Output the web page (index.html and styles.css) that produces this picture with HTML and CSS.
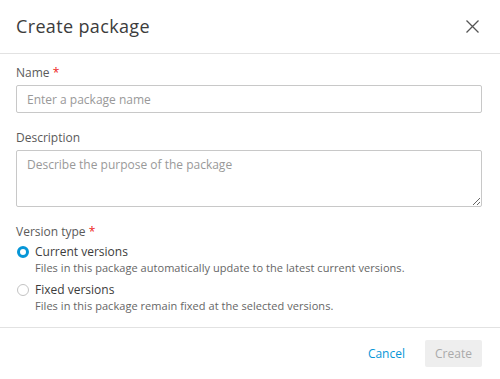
FILE: index.html
```html
<!DOCTYPE html>
<html lang="en">
<head>
  <meta charset="UTF-8" />
  <meta name="viewport" content="width=device-width, initial-scale=1.0" />
  <title>Create package</title>
  <link rel="stylesheet" href="styles.css">
</head>
<body>
  <div class="dialog">
    <header class="dialog-header">
      <h1>Create package</h1>
      <button class="close" aria-label="Close">
        <svg width="13" height="13" viewBox="0 0 13 13"><path d="M0.5 0.5 L12.5 12.5 M12.5 0.5 L0.5 12.5" stroke="#555" stroke-width="1.3" fill="none"/></svg>
      </button>
    </header>

    <div class="dialog-body">
      <label class="field-label">Name <span class="req">*</span></label>
      <input class="text-input" type="text" placeholder="Enter a package name">

      <label class="field-label spaced">Description</label>
      <textarea class="text-area" placeholder="Describe the purpose of the package"></textarea>

      <label class="field-label spaced">Version type <span class="req">*</span></label>
      <div class="options">
        <div class="option">
          <span class="radio checked"></span>
          <div class="option-text">
            <p class="option-title">Current versions</p>
            <p class="option-desc">Files in this package automatically update to the latest current versions.</p>
          </div>
        </div>
        <div class="option">
          <span class="radio"></span>
          <div class="option-text">
            <p class="option-title">Fixed versions</p>
            <p class="option-desc">Files in this package remain fixed at the selected versions.</p>
          </div>
        </div>
      </div>
    </div>

    <footer class="dialog-footer">
      <button class="btn-link">Cancel</button>
      <button class="btn-primary" disabled>Create</button>
    </footer>
  </div>
</body>
</html>
```

FILE: styles.css
```css
* { box-sizing: border-box; }
body {
  margin: 0;
  background: #fff;
  font-family: 'Open Sans', 'Noto Sans', sans-serif;
  color: #3c3c3c;
}
.dialog {
  width: 500px;
  height: 379px;
  display: flex;
  flex-direction: column;
}
.dialog-header {
  flex: none;
  height: 54px;
  display: flex;
  align-items: center;
  justify-content: space-between;
  padding: 0 21px 0 16px;
  border-bottom: 1px solid #e2e2e2;
}
.dialog-header h1 {
  margin: 0 0 1px;
  font-size: 18px;
  font-weight: 400;
  color: #3c3c3c;
  letter-spacing: 0.35px;
}
.close {
  border: 0;
  background: none;
  padding: 0;
  width: 13px;
  height: 13px;
  display: flex;
}
.dialog-body {
  flex: none;
  padding: 11px 18px 0 16px;
  display: flex;
  flex-direction: column;
}
.field-label {
  font-size: 12px;
  color: #5a5a5a;
  line-height: 16px;
  margin-bottom: 4px;
}
.field-label.spaced { margin-top: 17px; }
.req { color: #e22; }
.text-input, .text-area {
  width: 100%;
  border: 1px solid #c8c8c8;
  border-radius: 2px;
  font-family: inherit;
  font-size: 12px;
  padding: 0 10px;
  color: #3c3c3c;
}
.text-input { height: 28px; }
.text-area {
  height: 57px;
  padding-top: 5px;
  resize: vertical;
  display: block;
}
.text-input::placeholder, .text-area::placeholder { color: #999; }
.options {
  display: flex;
  flex-direction: column;
  gap: 6px;
}
.option {
  display: flex;
  gap: 6px;
}
.radio {
  width: 12px;
  height: 12px;
  margin-top: 2px;
  margin-left: 1px;
  border-radius: 50%;
  border: 1px solid #c3c3c3;
  flex: none;
}
.radio.checked { border: 3px solid #0696d7; }
.option-text p { margin: 0; }
.option-title {
  font-size: 12px;
  line-height: 16px;
  color: #3c3c3c;
}
.option-desc {
  font-size: 11px;
  line-height: 16px;
  color: #666;
  letter-spacing: 0.05px;
}
.dialog-footer {
  flex: none;
  margin-top: auto;
  height: 52px;
  border-top: 1px solid #e2e2e2;
  display: flex;
  align-items: center;
  justify-content: flex-end;
  gap: 20px;
  padding: 0 18px 0 0;
}
.btn-link {
  border: 0;
  background: none;
  font-family: inherit;
  font-size: 12px;
  color: #0696d7;
  padding: 0;
}
.btn-primary {
  border: 0;
  background: #eeeeee;
  color: #aaa;
  font-family: inherit;
  font-size: 12px;
  width: 57px;
  height: 27px;
  border-radius: 2px;
}
```
